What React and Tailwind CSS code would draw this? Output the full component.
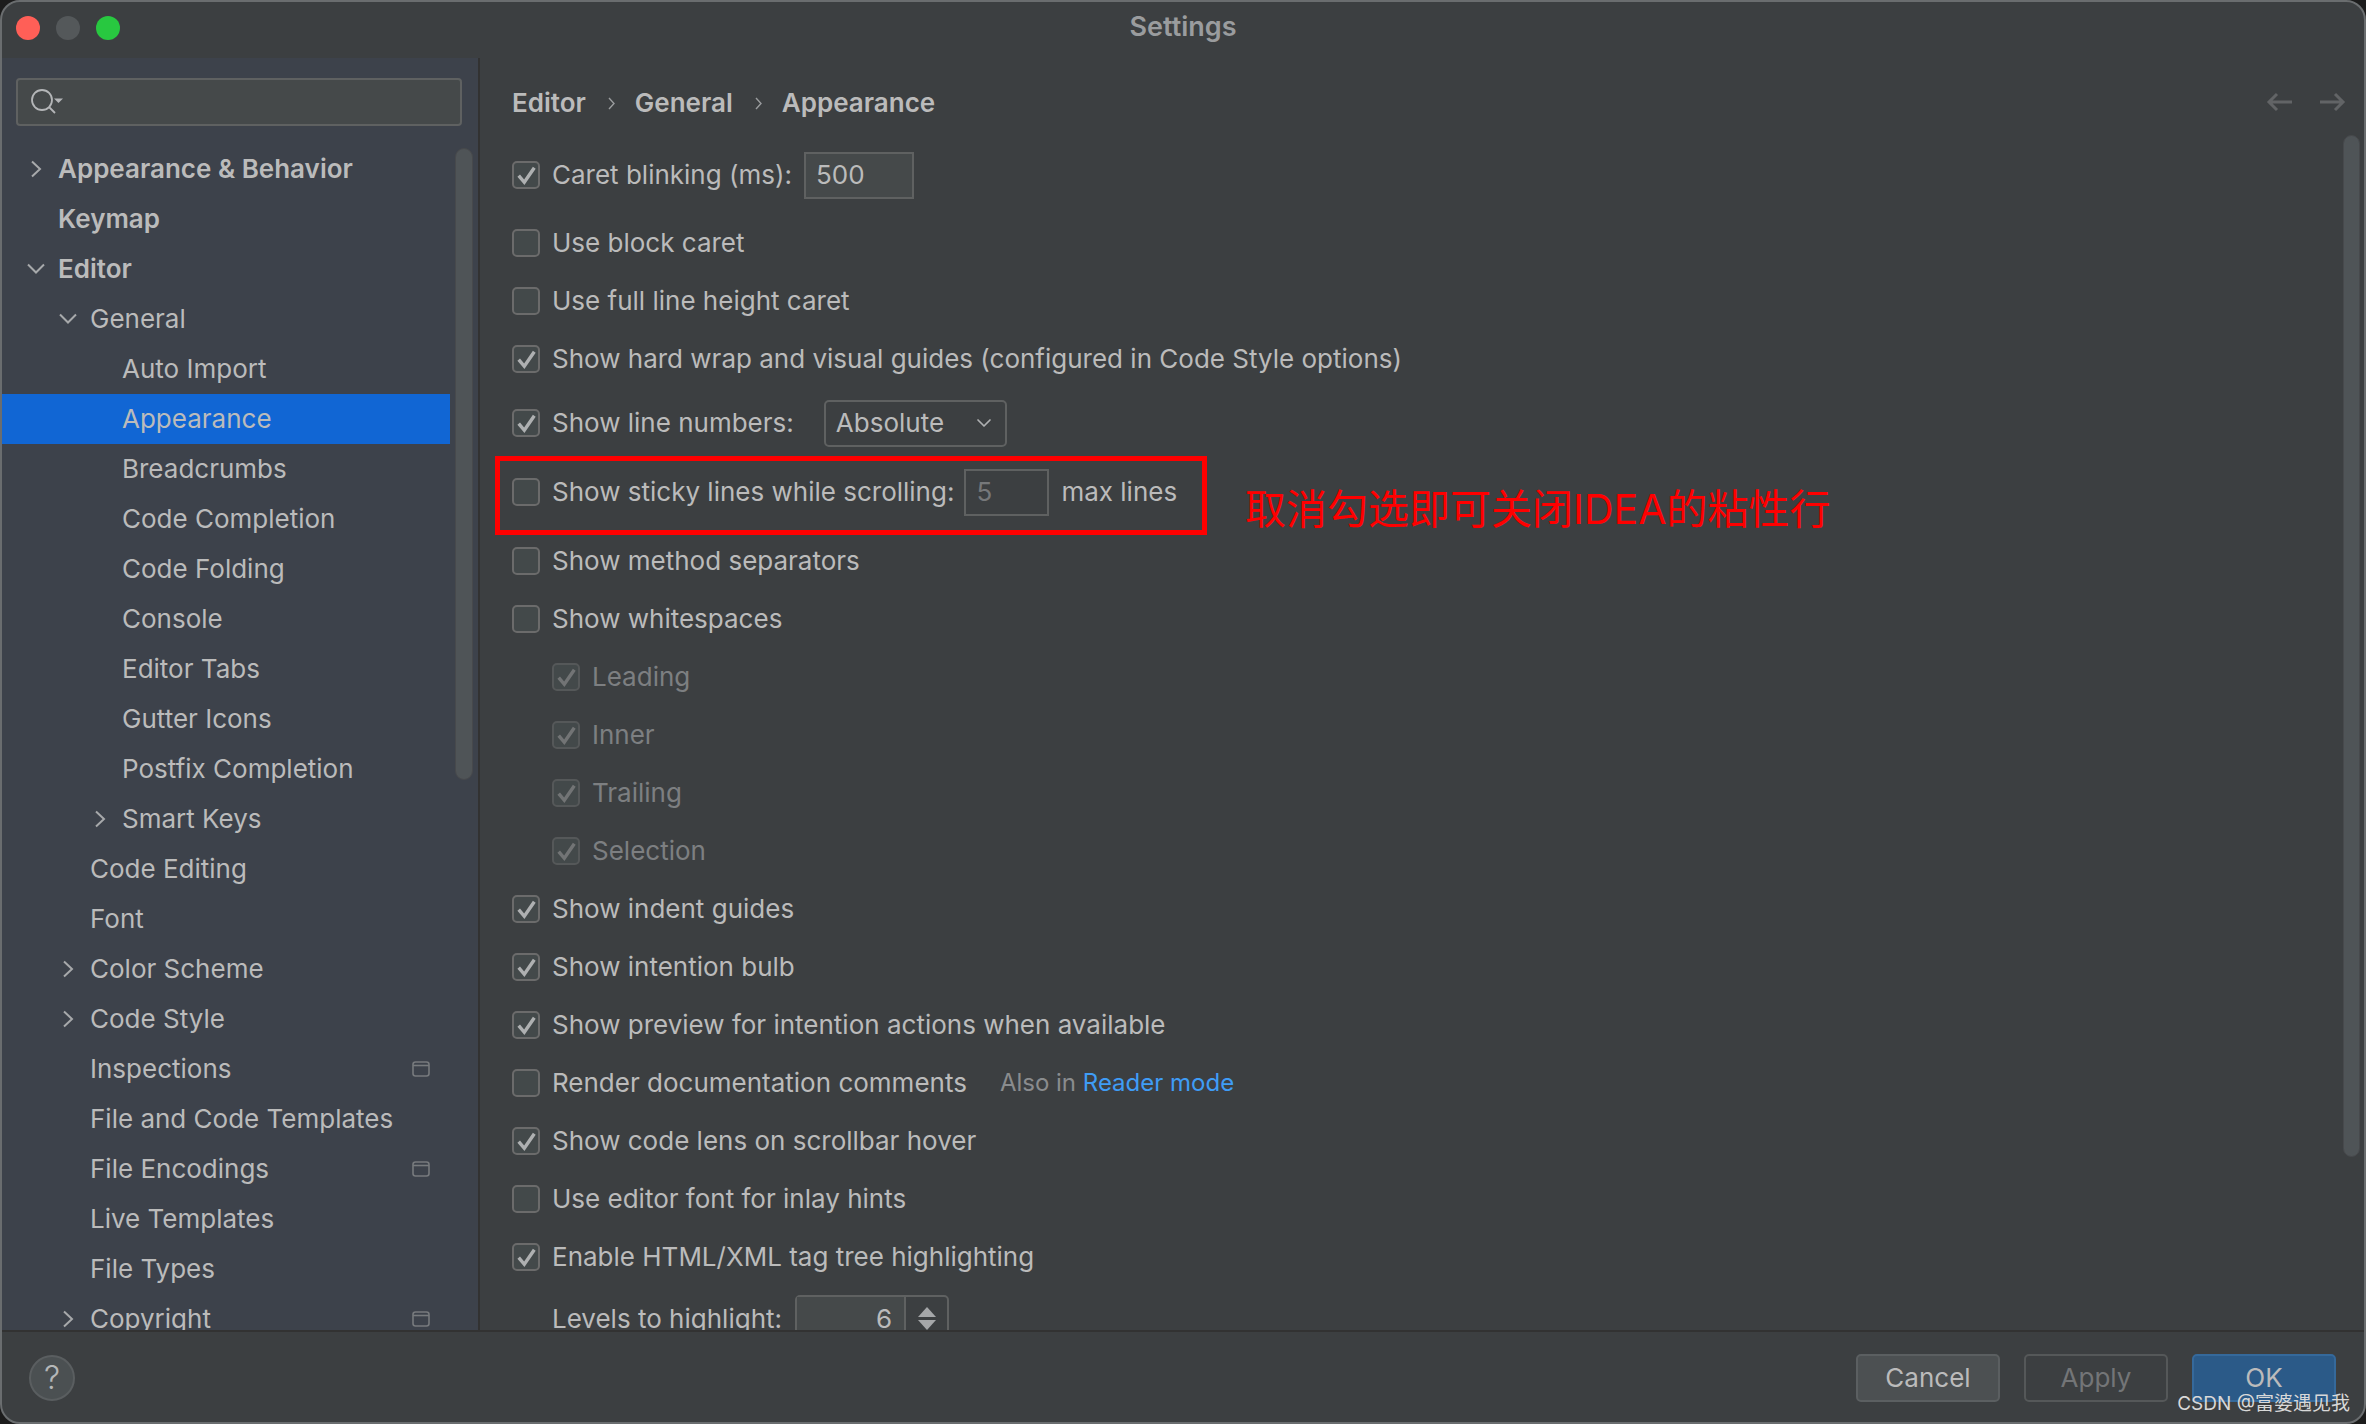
import React from 'react';
import { ChevronDown } from 'lucide-react';

const TREE = [
  { label: 'Appearance & Behavior', level: 0, arrow: 'right', bold: true },
  { label: 'Keymap', level: 0, bold: true },
  { label: 'Editor', level: 0, arrow: 'down', bold: true },
  { label: 'General', level: 1, arrow: 'down' },
  { label: 'Auto Import', level: 2 },
  { label: 'Appearance', level: 2, selected: true },
  { label: 'Breadcrumbs', level: 2 },
  { label: 'Code Completion', level: 2 },
  { label: 'Code Folding', level: 2 },
  { label: 'Console', level: 2 },
  { label: 'Editor Tabs', level: 2 },
  { label: 'Gutter Icons', level: 2 },
  { label: 'Postfix Completion', level: 2 },
  { label: 'Smart Keys', level: 2, arrow: 'right' },
  { label: 'Code Editing', level: 1 },
  { label: 'Font', level: 1 },
  { label: 'Color Scheme', level: 1, arrow: 'right' },
  { label: 'Code Style', level: 1, arrow: 'right' },
  { label: 'Inspections', level: 1, badge: true },
  { label: 'File and Code Templates', level: 1 },
  { label: 'File Encodings', level: 1, badge: true },
  { label: 'Live Templates', level: 1 },
  { label: 'File Types', level: 1 },
  { label: 'Copyright', level: 1, arrow: 'right', badge: true },
];

const INDENT = ['pl-[56px]', 'pl-[88px]', 'pl-[120px]'];
const ARROW_POS = ['left-[23px]', 'left-[55px]', 'left-[87px]'];

const TreeArrow = ({ dir }) => (
  <svg width="22" height="18" viewBox="0 0 22 18" fill="none" stroke="#a7a9ab" strokeWidth="2">
    {dir === 'down' ? <path d="M3 4.5l8 8 8-8" /> : <path d="M7 1.5l8 7.5-8 7.5" />}
  </svg>
);

const Crumb = () => (
  <svg width="7" height="13" viewBox="0 0 7 13" fill="none" stroke="#9a9c9e" strokeWidth="1.4" className="ml-[22px] mr-[20px]">
    <path d="M1 1l5 5.5-5 5.5" />
  </svg>
);

const TreeRow = ({ item }) => (
  <div
    className={`relative flex items-center h-[50px] w-[448px] ${INDENT[item.level]} ${item.selected ? 'bg-[#1166d4]' : ''} ${item.bold ? 'font-semibold' : ''}`}
  >
    {item.arrow && (
      <span className={`absolute flex ${ARROW_POS[item.level]}`}>
        <TreeArrow dir={item.arrow} />
      </span>
    )}
    <span>{item.label}</span>
    {item.badge && (
      <svg width="18" height="16" viewBox="0 0 18 16" fill="none" stroke="#777a7d" strokeWidth="1.6" className="absolute left-[410px]">
        <rect x="1" y="1" width="16" height="14" rx="2.5" />
        <path d="M1 4.5h16" />
      </svg>
    )}
  </div>
);

const CheckBox = ({ checked, dim }) => (
  <span className={`flex items-center justify-center w-[28px] h-[28px] shrink-0 rounded-[5px] border-2 bg-[#43494a] ${dim ? 'border-[#555859]' : 'border-[#6b6b6b]'}`}>
    {checked && (
      <svg width="24" height="24" viewBox="0 0 24 24" fill="none" stroke={dim ? '#727475' : '#aeb0b1'} strokeWidth="3.4">
        <path d="M4.7 12.7 L10.3 19.3 L20.3 4.7" />
      </svg>
    )}
  </span>
);

const Row = ({ label, checked, className = 'h-[58px]', dim, children }) => (
  <div className={`flex items-center ${className}`}>
    <CheckBox checked={checked} dim={dim} />
    <span className={`ml-[12px] ${dim ? 'text-[#7d7f81]' : ''}`}>{label}</span>
    {children}
  </div>
);

const Sidebar = () => (
  <aside className="relative w-[478px] shrink-0 bg-[#3d424b] border-r-2 border-[#323232] overflow-hidden">
    <div className="flex items-center mt-[20px] ml-[14px] w-[446px] h-[48px] rounded-[4px] border-2 border-[#5f6161] bg-[#45494a] pl-[12px]">
      <svg width="34" height="28" viewBox="0 0 34 28" fill="none" stroke="#b4b6b8" strokeWidth="1.8">
        <circle cx="12" cy="12" r="10" />
        <path d="M19 19 L25 25" />
        <path d="M24 10.5h9l-4.5 4.5z" fill="#b4b6b8" stroke="none" />
      </svg>
    </div>
    <div className="mt-[18px]">
      {TREE.map((item) => (
        <TreeRow key={item.label} item={item} />
      ))}
    </div>
    <div className="absolute left-[453px] top-[90px] w-[18px] h-[632px] rounded-full bg-[#4f5457] border border-[#47494c]" />
  </aside>
);

const Content = () => (
  <main className="relative flex-1 overflow-hidden pl-[32px]">
    <div className="flex items-center h-[90px] -mb-[2px] font-semibold">
      <span>Editor</span>
      <Crumb />
      <span>General</span>
      <Crumb />
      <span>Appearance</span>
    </div>

    <Row label="Caret blinking (ms):" checked className="h-[58px]">
      <div className="flex items-center ml-[12px] w-[110px] h-[47px] border-2 border-[#5f6161] bg-[#45494a] pl-[10px]">500</div>
    </Row>
    <div className="h-[10px]" />
    <Row label="Use block caret" />
    <Row label="Use full line height caret" />
    <Row label="Show hard wrap and visual guides (configured in Code Style options)" checked />
    <Row label="Show line numbers:" checked className="h-[58px] mt-[6px]">
      <div className="flex items-center justify-between ml-[30px] w-[183px] h-[47px] rounded-[5px] border-2 border-[#5f6161] pl-[10px] pr-[9px]">
        <span>Absolute</span>
        <ChevronDown size={24} strokeWidth={1.7} className="text-[#aeb0b1]" />
      </div>
    </Row>
    <Row label="Show sticky lines while scrolling:" className="h-[58px] mt-[11px]">
      <div className="flex items-center ml-[10px] w-[85px] h-[47px] border-2 border-[#5f6161] pl-[10px] text-[#76787a]">5</div>
      <span className="ml-[12px]">max lines</span>
    </Row>
    <Row label="Show method separators" className="h-[58px] mt-[11px]" />
    <Row label="Show whitespaces" />
    <div className="pl-[40px]">
      <Row label="Leading" checked dim />
      <Row label="Inner" checked dim />
      <Row label="Trailing" checked dim />
      <Row label="Selection" checked dim />
    </div>
    <Row label="Show indent guides" checked />
    <Row label="Show intention bulb" checked />
    <Row label="Show preview for intention actions when available" checked />
    <Row label="Render documentation comments">
      <span className="ml-[33px] text-[24px] text-[#8a8c8e]">Also in <span className="text-[#3f9cf5]">Reader mode</span></span>
    </Row>
    <Row label="Show code lens on scrollbar hover" checked />
    <Row label="Use editor font for inlay hints" />
    <Row label="Enable HTML/XML tag tree highlighting" checked />
    <div className="flex items-center h-[47px] pl-[40px] mt-[9px]">
      <span>Levels to highlight:</span>
      <div className="flex ml-[13px] w-[154px] h-[47px] rounded-[5px] border-2 border-[#5f6161]">
        <span className="flex items-center justify-end w-[107px] pr-[12px] bg-[#45494a]">6</span>
        <span className="flex flex-col items-center justify-center gap-[3px] flex-1 border-l-2 border-[#5f6161]">
          <svg width="18" height="10" viewBox="0 0 18 10" fill="#a5a7a9"><path d="M9 0l9 10H0z" /></svg>
          <svg width="18" height="10" viewBox="0 0 18 10" fill="#a5a7a9"><path d="M0 0h18L9 10z" /></svg>
        </span>
      </div>
    </div>

    <div className="absolute top-[34px] right-[18px] flex gap-[28px]">
      <svg width="26" height="20" viewBox="0 0 26 20" fill="none" stroke="#626466" strokeWidth="3"><path d="M26 10H3M11 2l-8 8 8 8" /></svg>
      <svg width="26" height="20" viewBox="0 0 26 20" fill="none" stroke="#626466" strokeWidth="3"><path d="M0 10h23M15 2l8 8-8 8" /></svg>
    </div>
    <div className="absolute right-[4px] top-[77px] w-[17px] h-[1022px] rounded-full bg-[#4f5457] border border-[#47494c]" />
    <div className="absolute left-[15px] top-[398px] w-[712px] h-[79px] border-[5px] border-[#ff0000]" />
    <div className="absolute left-[765px] top-[424px] text-[41px] leading-[54px] text-[#ff0000]">
      取消勾选即可关闭IDEA的粘性行
    </div>
  </main>
);

const Footer = () => (
  <footer className="relative flex items-center justify-between h-[92px] shrink-0 border-t-2 pt-[2px] border-[#323232] pl-[27px] pr-[28px]">
    <span className="flex items-center justify-center w-[46px] h-[46px] rounded-full border-2 border-[#5a5e60] bg-[#4b5052] text-[#b5b7b8] text-[32px] font-light">?</span>
    <div className="flex gap-[24px]">
      <button className="w-[144px] h-[48px] rounded-[5px] border-2 border-[#5b5f61] bg-[#4c5052]">Cancel</button>
      <button className="w-[144px] h-[48px] rounded-[5px] border-2 border-[#555859] text-[#737577]">Apply</button>
      <button className="w-[144px] h-[48px] rounded-[5px] border-2 border-[#35699b] bg-[#2b5a88]">OK</button>
    </div>
    <span className="absolute right-[14px] bottom-[6px] text-[19px] leading-[24px] text-[#d8d8d8]">
      CSDN @富婆遇见我
    </span>
  </footer>
);

export default function App() {
  return (
    <div className="w-[2366px] h-[1424px] bg-[#1c1c1c] overflow-hidden">
      <div className="flex flex-col h-full rounded-[20px] overflow-hidden border-2 border-[#6a6d6f] bg-[#3c3f41] text-[#bbbbbb] text-[26px] leading-[34px] font-['Inter','Noto_Sans_CJK_SC',sans-serif]">
        <header className="relative flex items-center justify-center h-[56px] pb-[6px] shrink-0">
          <div className="absolute left-[14px] top-[14px] flex gap-[16px]">
            <span className="w-[24px] h-[24px] rounded-full bg-[#ff5f57]" />
            <span className="w-[24px] h-[24px] rounded-full bg-[#54585a]" />
            <span className="w-[24px] h-[24px] rounded-full bg-[#28c840]" />
          </div>
          <span className="font-semibold text-[27px] text-[#9a9c9e]">Settings</span>
        </header>
        <div className="flex flex-1 min-h-0">
          <Sidebar />
          <Content />
        </div>
        <Footer />
      </div>
    </div>
  );
}
